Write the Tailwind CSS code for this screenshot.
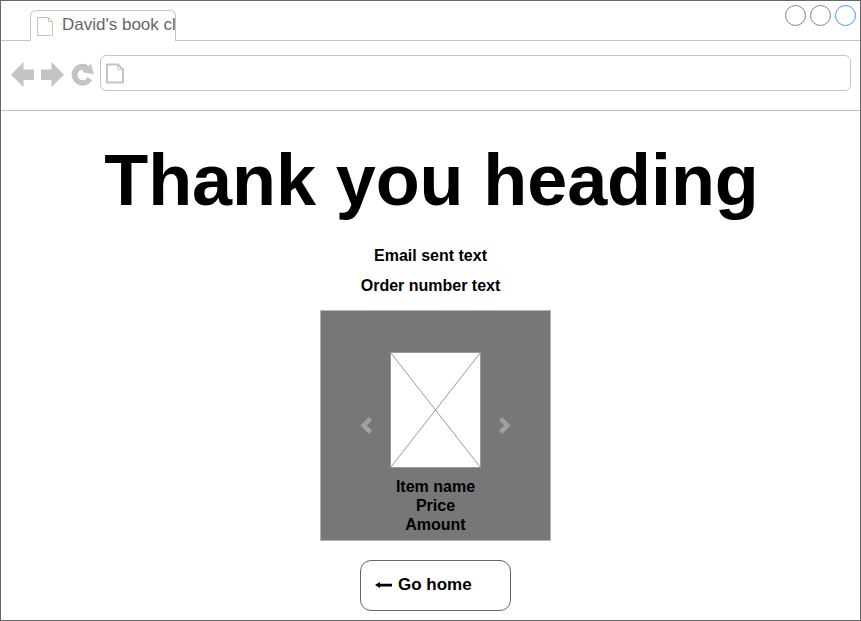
<!DOCTYPE html>
<html lang="en">
<head>
<meta charset="utf-8">
<title>David's book club</title>
<script src="https://cdn.jsdelivr.net/npm/@tailwindcss/browser@4"></script>
</head>
<body class="bg-white">
<div class="flex h-[621px] w-[861px] flex-col overflow-hidden border border-[#666] bg-white font-['Liberation_Sans',Arial,sans-serif] text-black">
  <header class="flex h-10 shrink-0 justify-between border-b border-[#c4c4c4] pl-[29px] pr-1">
    <div class="mt-[9px] flex h-[31px] w-[146px] overflow-hidden rounded-t-[6px] border border-b-0 border-[#c4c4c4] bg-white">
      <svg class="ml-[5px] mt-[5px] shrink-0" width="18" height="20" viewBox="36 16 18 20" fill="none" stroke="#c4c4c4"><path d="M37.500 17.500H48.500L52.500 21.500V35.500H37.500ZM48.500 17.500V21.500H52.500"/></svg>
      <span class="ml-2 mt-1 whitespace-nowrap text-[17px] leading-5 text-[#666]">David's book cl</span>
    </div>
    <div class="mt-1 flex gap-1">
      <span class="size-[21px] rounded-full border border-[#808080]"></span>
      <span class="size-[21px] rounded-full border border-[#808080]"></span>
      <span class="size-[21px] rounded-full border border-[#3399ff]"></span>
    </div>
  </header>
  <nav class="flex h-[70px] shrink-0 border-b border-[#c4c4c4] pl-[9px] pt-[14px]">
    <svg class="mt-[5px] shrink-0" width="90" height="30" viewBox="10 60 90 30" fill="#c4c4c4">
      <path d="M11 74.700L23.500 62V69.500H34V80H23.500V87Z"/>
      <path d="M64 74.700L51.500 62V69.500H41V80H51.500V87Z"/>
      <path d="M92 80.200A10.900 10.900 0 1 1 88.800 65.800L91.200 63.800L93.800 74.300L83 72.200V70.100A5 5 0 1 0 87.300 77Z"/>
    </svg>
    <div class="h-9 w-[751px] rounded-[6px] border border-[#c4c4c4]">
      <svg class="ml-1 mt-[6px]" width="22" height="24" viewBox="105 62 22 24" fill="none" stroke="#c4c4c4"><path stroke-width="2" d="M107 64.500H118L123 69.500V82.500H107Z"/><path d="M118 64.500V69.500H123"/></svg>
    </div>
  </nav>
  <main class="flex flex-1 flex-col items-center">
    <h1 class="ml-[2px] mt-[28px] whitespace-nowrap text-[72px] font-bold leading-[82px] tracking-[-0.1px]">Thank you heading</h1>
    <p class="mt-[25px] text-base font-bold leading-[19px]">Email sent text</p>
    <p class="mt-[11px] text-base font-bold leading-[19px]">Order number text</p>
    <section class="ml-[10px] mt-[15px] flex h-[231px] w-[231px] shrink-0 flex-col items-center border border-[#b3b3b3] bg-[#777]">
      <div class="mt-[41px] flex">
        <svg class="mr-[17px] mt-[63px]" width="14" height="20" viewBox="359 415 14 20" fill="#a0a0a0"><path d="M360.500 425.500L368.800 417L372 420.200L366.800 425.500L372 430.800L368.800 434Z"/></svg>
        <svg width="91" height="116" viewBox="0 0 91 116" fill="#fff" stroke="#999"><rect x=".5" y=".5" width="90" height="115"/><path d="M.5 .5L90.500 115.500M90.500 .5L.5 115.500"/></svg>
        <svg class="ml-[17px] mt-[63px]" width="14" height="20" viewBox="498 415 14 20" fill="#a0a0a0"><path d="M510.500 425.500L502.200 417L499 420.200L504.200 425.500L499 430.800L502.200 434Z"/></svg>
      </div>
      <div class="mt-[9px] text-center text-base font-bold leading-[19px]"><p>Item name</p><p>Price</p><p>Amount</p></div>
    </section>
    <button class="ml-[10px] mt-[19px] flex h-[51px] w-[151px] shrink-0 items-center rounded-[11px] border border-[#666] pl-[14px] text-[17px] font-bold">
      <svg class="mr-[5px] -mt-px" width="18" height="8" viewBox="375 581 18 8"><path d="M375 585L380 582V583.700H392V586.600H380V588Z"/></svg>
      <span class="-mt-[2px]">Go home</span>
    </button>
  </main>
</div>
</body>
</html>
